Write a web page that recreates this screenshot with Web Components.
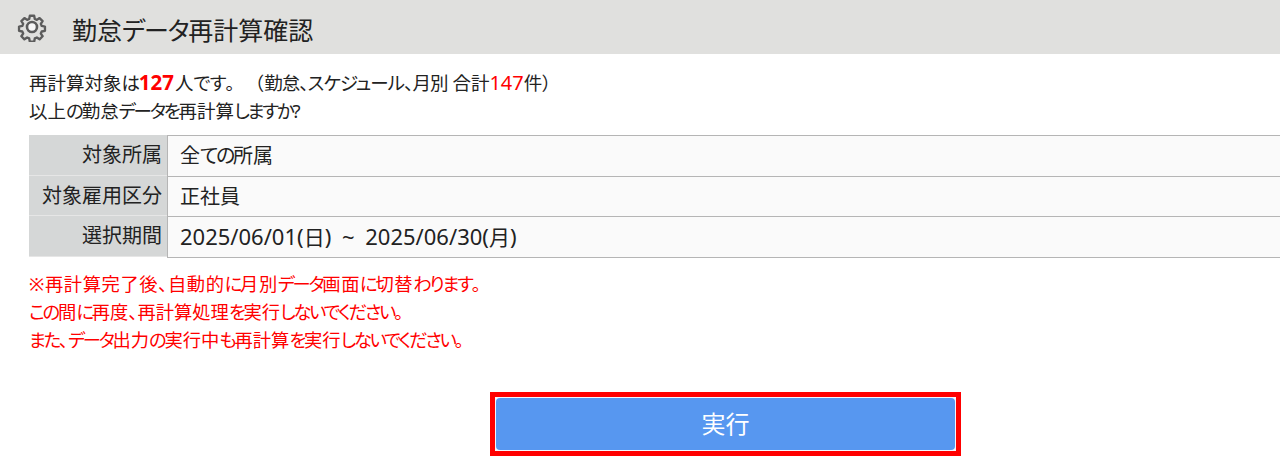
<!DOCTYPE html>
<html lang="ja">
<head>
<meta charset="utf-8">
<style>
html, body { margin: 0; padding: 0; background: #fff; height: 474px; overflow: hidden; }
body { font-family: "Noto Sans", "Noto Sans CJK JP", sans-serif; color: #222; }
.k { letter-spacing: -.12em; }
.date { font-size: 22px; word-spacing: 5px; }
.date i { font-style: normal; font-size: 21px; }
</style>
</head>
<body>
<confirm-page>
  <page-header slot="header">勤怠<span style="letter-spacing:-.05em">データ</span>再計算確認</page-header>
  <summary-text slot="summary"></summary-text>
  <info-table slot="table">
    <info-row label="対象所属">全<span class="k">ての</span>所属</info-row>
    <info-row label="対象雇用区分">正社員</info-row>
    <info-row label="選択期間"><span class="date">2025/06/01(<i>日</i>) ~ 2025/06/30(<i>月</i>)</span></info-row>
  </info-table>
  <notice-text slot="notice"></notice-text>
  <run-button slot="action">実行</run-button>
</confirm-page>

<script>
// Meiryo UI style: kana sit tighter than kanji
function tightKana(text) {
    return text.replace(/[ぁ-んァ-ヶー]+/g, '<span class="k">$&</span>');
}

class ConfirmPage extends HTMLElement {
    constructor() {
        super();
        this.shadowDOM = this.attachShadow({ mode: 'open' });
        this.shadowDOM.innerHTML = `
            <style>
                :host { display: flex; flex-direction: column; width: 1280px; height: 474px; }
                .body { display: flex; flex-direction: column; padding: 15px 0 0 29px; }
            </style>
            <slot name="header"></slot>
            <div class="body">
                <slot name="summary"></slot>
                <slot name="table"></slot>
                <slot name="notice"></slot>
                <slot name="action"></slot>
            </div>
        `;
    }
}

class PageHeader extends HTMLElement {
    constructor() {
        super();
        this.shadowDOM = this.attachShadow({ mode: 'open' });
        this.shadowDOM.innerHTML = `
            <style>
                :host {
                    display: flex;
                    align-items: center;
                    height: 54px;
                    padding-left: 17px;
                    gap: 25px;
                    background: #e0e0de;
                    font-size: 25px;
                    color: #222;
                    font-feature-settings: "palt";
                }
                svg { width: 30px; height: 30px; flex: none; }
                span { padding-top: 3px; }
            </style>
            <svg viewBox="0 0 30 30" fill="none" stroke="#5c5c5c" stroke-width="2.6" stroke-linejoin="round">
                <path d="M12.6 2.5h4.8l.7 3.6 2.3 1 3-2 3.4 3.4-2 3 1 2.3 3.6.7v4.8l-3.6.7-1 2.3 2 3-3.4 3.4-3-2-2.3 1-.7 3.6h-4.8l-.7-3.6-2.3-1-3 2-3.4-3.4 2-3-1-2.3-3.6-.7v-4.8l3.6-.7 1-2.3-2-3 3.4-3.4 3 2 2.3-1z" transform="translate(1.5 1.5) scale(.9)"/>
                <circle cx="15" cy="15" r="5" fill="#f6f6f6"/>
            </svg>
            <span><slot></slot></span>
        `;
    }
}

class SummaryText extends HTMLElement {
    constructor() {
        super();
        this.shadowDOM = this.attachShadow({ mode: 'open' });
        this.shadowDOM.innerHTML = `
            <style>
                :host {
                    display: block;
                    font-size: 18.5px;
                    line-height: 28px;
                    color: #222;
                    font-feature-settings: "palt";
                }
                .k { letter-spacing: -.12em; }
                .loose { letter-spacing: -.05em; }
                .wide { font-feature-settings: normal; }
                .paren { margin-left: 11px; }
                b { color: #f00; font-size: 20.5px; line-height: 1; margin: 0 1px; }
                em { color: #f00; font-style: normal; font-size: 20px; line-height: 1; }
            </style>
            <div>再計算対象<span class="k">は</span><b>127</b>人<span class="loose">です</span><span class="wide">。</span><span class="wide paren">（</span><span class="loose">勤怠、スケジュール、月別</span> 合計<em>147</em>件）</div>
            <div>${tightKana('以上の勤怠データを再計算しますか')}?</div>
        `;
    }
}

class InfoTable extends HTMLElement {
    constructor() {
        super();
        this.shadowDOM = this.attachShadow({ mode: 'open' });
        this.shadowDOM.innerHTML = `
            <style>
                :host {
                    display: flex;
                    flex-direction: column;
                    margin-top: 10px;
                    width: 1251px;
                }
            </style>
            <slot></slot>
        `;
    }
}

class InfoRow extends HTMLElement {
    constructor() {
        super();
        this.shadowDOM = this.attachShadow({ mode: 'open' });
        this.shadowDOM.innerHTML = `
            <style>
                :host {
                    display: grid;
                    grid-template-columns: 138px 1fr;
                    height: 40.6px;
                    font-size: 20px;
                    color: #222;
                    font-feature-settings: "palt";
                }
                .label {
                    display: flex;
                    align-items: center;
                    justify-content: flex-end;
                    padding: 0 5px 2px 0;
                    background: #d5d7d7;
                    border-bottom: 1px solid #e6e6e6;
                }
                .value {
                    display: flex;
                    align-items: center;
                    padding: 0 0 2px 12px;
                    background: #fafafa;
                    border-left: 1px solid #b5b5b5;
                    border-top: 1px solid #b5b5b5;
                    border-bottom: 1px solid #b5b5b5;
                    margin-bottom: -1px;
                }
            </style>
            <div class="label"></div>
            <div class="value"><slot></slot></div>
        `;
    }

    connectedCallback() {
        this.shadowDOM.querySelector('.label').textContent = this.getAttribute('label');
    }
}

class NoticeText extends HTMLElement {
    constructor() {
        super();
        this.shadowDOM = this.attachShadow({ mode: 'open' });
        this.shadowDOM.innerHTML = `
            <style>
                :host {
                    display: block;
                    margin-top: 13px;
                    font-size: 18.3px;
                    line-height: 28px;
                    color: #f00;
                    font-feature-settings: "palt";
                }
                .k { letter-spacing: -.12em; }
                .first { letter-spacing: .6px; }
            </style>
            <div class="first">${tightKana('※再計算完了後、自動的に月別データ画面に切替わります。')}</div>
            <div>${tightKana('この間に再度、再計算処理を実行しないでください。')}</div>
            <div>${tightKana('また、データ出力の実行中も再計算を実行しないでください。')}</div>
        `;
    }
}

class RunButton extends HTMLElement {
    constructor() {
        super();
        this.shadowDOM = this.attachShadow({ mode: 'open' });
        this.shadowDOM.innerHTML = `
            <style>
                :host {
                    display: block;
                    box-sizing: border-box;
                    width: 471px;
                    height: 64px;
                    margin: 38px 0 0 461px;
                    border: 5px solid #ff0000;
                    padding: 1px;
                    background: #f4f7fd;
                }
                button {
                    display: block;
                    width: 100%;
                    height: 100%;
                    padding: 0 0 2px;
                    border: none;
                    border-radius: 4px;
                    background: #5797f0;
                    color: #fff;
                    font: inherit;
                    font-size: 24px;
                }
            </style>
            <button type="button"><slot></slot></button>
        `;
    }
}

customElements.define('confirm-page', ConfirmPage);
customElements.define('page-header', PageHeader);
customElements.define('summary-text', SummaryText);
customElements.define('info-table', InfoTable);
customElements.define('info-row', InfoRow);
customElements.define('notice-text', NoticeText);
customElements.define('run-button', RunButton);
</script>
</body>
</html>
